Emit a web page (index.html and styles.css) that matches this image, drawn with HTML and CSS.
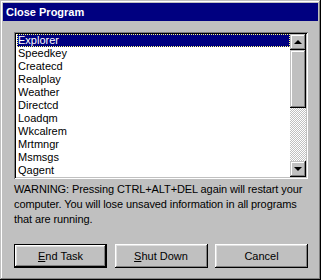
FILE: index.html
```html
<!DOCTYPE html>
<html lang="en">
<head>
  <meta charset="UTF-8" />
  <title>Close Program</title>
  <link rel="stylesheet" href="styles.css">
</head>
<body>
  <div class="window">
    <div class="title-bar">Close Program</div>

    <div class="content">
      <div class="listbox">
        <ul class="tasks">
          <li class="selected"><span>Explorer</span></li>
          <li><span>Speedkey</span></li>
          <li><span>Createcd</span></li>
          <li><span>Realplay</span></li>
          <li><span>Weather</span></li>
          <li><span>Directcd</span></li>
          <li><span>Loadqm</span></li>
          <li><span>Wkcalrem</span></li>
          <li><span>Mrtmngr</span></li>
          <li><span>Msmsgs</span></li>
          <li><span>Qagent</span></li>
        </ul>
        <div class="scrollbar">
          <div class="sb-btn"><span class="arrow up"></span></div>
          <div class="sb-thumb"></div>
          <div class="sb-track"></div>
          <div class="sb-btn"><span class="arrow down"></span></div>
        </div>
      </div>

      <p class="warning">WARNING: Pressing CTRL+ALT+DEL again will restart your computer. You will lose unsaved information in all programs that are running.</p>

      <div class="buttons">
        <button class="btn default"><u>E</u>nd Task</button>
        <button class="btn"><u>S</u>hut Down</button>
        <button class="btn">Cancel</button>
      </div>
    </div>
  </div>
</body>
</html>
```

FILE: styles.css
```css
body {
  margin: 0;
  font-family: "Liberation Sans", Arial, sans-serif;
  font-size: 11px;
  background: #c0c0c0;
}
.window {
  width: 321px;
  height: 280px;
  box-sizing: border-box;
  padding: 3px;
  background: #c0c0c0;
  box-shadow: inset -1px -1px #000, inset 1px 1px #c0c0c0,
              inset -2px -2px #808080, inset 2px 2px #fff;
}
.title-bar {
  height: 18px;
  line-height: 18px;
  background: #000080;
  color: #fff;
  font-weight: bold;
  padding-left: 3px;
}
.content {
  padding: 11px 10px 0 11px;
}

.listbox {
  display: flex;
  height: 147px;
  box-sizing: border-box;
  padding: 2px;
  background: #fff;
  box-shadow: inset 1px 1px #808080, inset -1px -1px #fff,
              inset 2px 2px #000, inset -2px -2px #c0c0c0;
}
.tasks {
  flex: 1;
  list-style: none;
  margin: 0;
  padding: 0;
}
.tasks li {
  height: 13px;
  line-height: 13px;
  padding-left: 1px;
  color: #000;
}
.tasks li span {
  display: block;
  padding-left: 1px;
}
.tasks li.selected span {
  background: #000080;
  color: #fff;
  outline: 1px dotted #ffff80;
  outline-offset: -1px;
}

.scrollbar {
  width: 16px;
  display: flex;
  flex-direction: column;
}
.sb-btn, .sb-thumb {
  background: #c0c0c0;
  box-shadow: inset -1px -1px #000, inset 1px 1px #c0c0c0,
              inset -2px -2px #808080, inset 2px 2px #fff;
}
.sb-btn {
  height: 16px;
  display: flex;
  align-items: center;
  justify-content: center;
}
.sb-thumb {
  height: 58px;
}
.sb-track {
  flex: 1;
  background: repeating-conic-gradient(#c0c0c0 0 25%, #fff 0 50%) 0 0 / 2px 2px;
}
.arrow {
  width: 0;
  height: 0;
  border-left: 4px solid transparent;
  border-right: 4px solid transparent;
}
.arrow.up {
  border-bottom: 4px solid #000;
  margin-top: -1px;
}
.arrow.down {
  border-top: 4px solid #000;
}

.warning {
  margin: 3px 0 0 0;
  line-height: 15px;
  letter-spacing: -0.1px;
  color: #000;
}

.buttons {
  display: flex;
  justify-content: space-between;
  margin-top: 17px;
}
.btn {
  width: 93px;
  height: 24px;
  padding: 0;
  border: none;
  font-family: inherit;
  font-size: 11px;
  color: #000;
  background: #c0c0c0;
  box-shadow: inset -1px -1px #000, inset 1px 1px #fff,
              inset -2px -2px #808080, inset 2px 2px #dfdfdf;
}
.btn.default {
  box-shadow: inset 0 0 0 1px #000, inset -2px -2px #000, inset 2px 2px #fff,
              inset -3px -3px #808080, inset 3px 3px #dfdfdf;
}
```
